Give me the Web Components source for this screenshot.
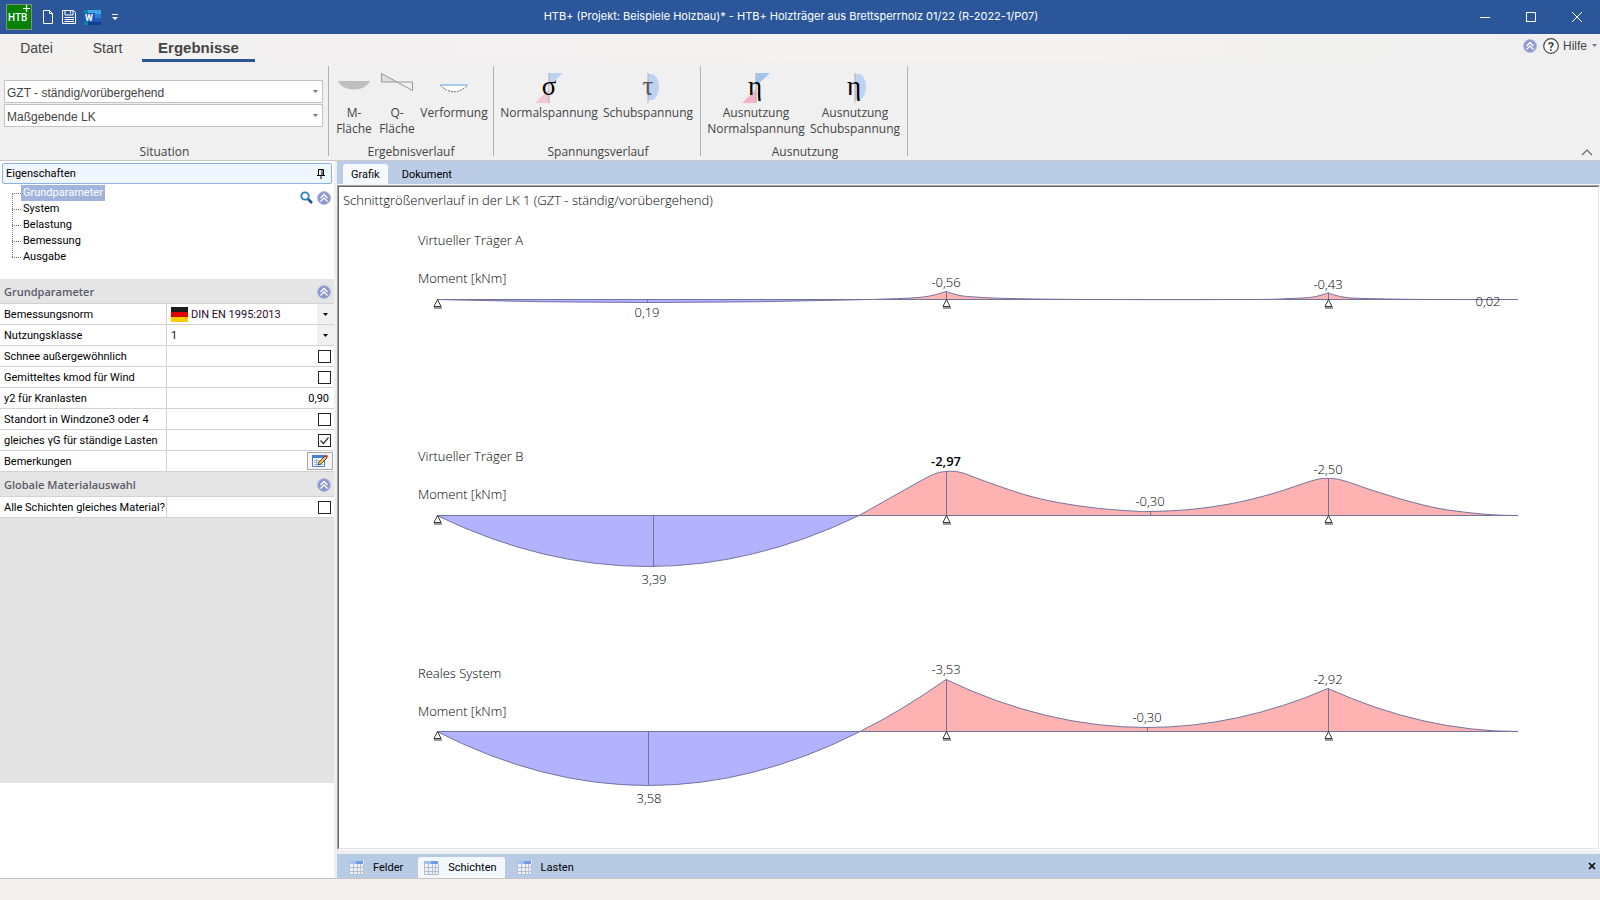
<!DOCTYPE html>
<html lang="de">
<head>
<meta charset="utf-8">
<title>HTB+ Holzträger aus Brettsperrholz</title>
<style>
html, body { margin: 0; height: 100%; }
body { font: 11px/16px Roboto, "Liberation Sans", sans-serif; color: #000; background: #f0f0f0; overflow: hidden; }
</style>
</head>
<body>
<app-window>
  <title-bar slot="title">HTB+ (Projekt: Beispiele Holzbau)* - HTB+ Holzträger aus Brettsperrholz 01/22 (R-2022-1/P07)</title-bar>
  <ribbon-tabs slot="tabs"></ribbon-tabs>
  <ribbon-bar slot="ribbon">
    <ribbon-group caption="Situation" class="selects">
      <ribbon-select label="Situation" value="GZT - ständig/vorübergehend"></ribbon-select>
      <ribbon-select label="Lastkombination" value="Maßgebende LK"></ribbon-select>
    </ribbon-group>
    <ribbon-group caption="Ergebnisverlauf" class="results">
      <ribbon-button icon="moment" style="--w:42px">M-<br>Fläche</ribbon-button>
      <ribbon-button icon="shear" style="--w:44px">Q-<br>Fläche</ribbon-button>
      <ribbon-button icon="deflection" style="--w:70px">Verformung</ribbon-button>
    </ribbon-group>
    <ribbon-group caption="Spannungsverlauf" class="stress">
      <ribbon-button icon="sigma" style="--w:100px">Normalspannung</ribbon-button>
      <ribbon-button icon="tau" style="--w:98px">Schubspannung</ribbon-button>
    </ribbon-group>
    <ribbon-group caption="Ausnutzung" class="usage">
      <ribbon-button icon="etaN" style="--w:100px">Ausnutzung<br>Normalspannung</ribbon-button>
      <ribbon-button icon="etaS" style="--w:98px">Ausnutzung<br>Schubspannung</ribbon-button>
    </ribbon-group>
  </ribbon-bar>
  <side-panel slot="side">
    <nav-tree></nav-tree>
    <prop-section caption="Grundparameter">
      <prop-row label="Bemessungsnorm" type="select" value="DIN EN 1995:2013" flag></prop-row>
      <prop-row label="Nutzungsklasse" type="select" value="1"></prop-row>
      <prop-row label="Schnee außergewöhnlich" type="check"></prop-row>
      <prop-row label="Gemitteltes kmod für Wind" type="check"></prop-row>
      <prop-row label="y2 für Kranlasten" type="text" value="0,90"></prop-row>
      <prop-row label="Standort in Windzone3 oder 4" type="check"></prop-row>
      <prop-row label="gleiches γG für ständige Lasten" type="check" checked></prop-row>
      <prop-row label="Bemerkungen" type="button"></prop-row>
    </prop-section>
    <prop-section caption="Globale Materialauswahl">
      <prop-row label="Alle Schichten gleiches Material?" type="check"></prop-row>
    </prop-section>
  </side-panel>
  <view-tabs slot="main"></view-tabs>
  <moment-diagram slot="main"></moment-diagram>
  <table-tabs slot="main"></table-tabs>
</app-window>

<script>
const define = (name, html, setup) => {
  const template = document.createElement('template');
  template.innerHTML = html;
  customElements.define(name, class extends HTMLElement {
    connectedCallback() {
      if (this.shadowRoot) return;
      this.attachShadow({ mode: 'open' }).append(template.content.cloneNode(true));
      if (setup) setup(this, this.shadowRoot);
    }
  });
};
const RESET = `:host,*{box-sizing:border-box} button{font:inherit;color:inherit;background:none;border:0;padding:0;margin:0} svg{display:block}`;

define('app-window', `<style>${RESET}
:host{display:grid;grid-template:auto auto auto minmax(0,1fr) 22px/334px minmax(0,1fr);column-gap:3px;height:100vh}
.wide{grid-column:1/-1;min-width:0}
.side{background:#fff;min-height:0;overflow:hidden}
main{display:flex;flex-direction:column;min-width:0;min-height:0}
footer{background:#f2f0ef;border-top:1px solid #c6c3c1}
</style>
<div class="wide"><slot name="title"></slot></div>
<div class="wide"><slot name="tabs"></slot></div>
<div class="wide"><slot name="ribbon"></slot></div>
<div class="side"><slot name="side"></slot></div>
<main><slot name="main"></slot></main>
<footer class="wide"></footer>`);

define('title-bar', `<style>${RESET}
:host{display:flex;align-items:center;height:34px;background:#2b579a;color:#fff;font:11px/16px Inter,sans-serif}
.quick{display:flex;align-items:center;width:120px;padding-left:6px}
.new{margin-left:10px}.save{margin-left:7px}.word{margin-left:7px}.more{margin-left:11px}
h1{flex:1;margin:0;font:inherit;text-align:center;white-space:nowrap;padding-bottom:2px}
.win{display:flex}.win button{width:46px;height:34px;display:grid;place-items:center}
</style>
<div class="quick">
<svg width="26" height="26" viewBox="0 0 26 26"><rect x=".5" y=".5" width="25" height="25" fill="#068206" stroke="#84907c"/><text x="2" y="17" font-family="Roboto" font-size="10" font-weight="500" fill="#fff">HTB</text><path d="M17 4.500h7M20.500 1v7" stroke="#fff" stroke-width="1.200"/></svg>
<button class="new" aria-label="Neu"><svg width="12" height="16" viewBox="0 0 12 16" fill="none" stroke="#fff"><path d="M1.500 1.500h6l3 3v10h-9zM7.500 1.500v3h3"/></svg></button>
<button class="save" aria-label="Speichern"><svg width="16" height="16" viewBox="0 0 16 16" fill="none" stroke="#fff"><path d="M1.500 1.500h11l2 2v11h-13zM4 1.500v4.500h8v-4.500M9.500 2v2.500M3.500 8.500h9.500M3.500 10.500h9.500M3.500 12.500h9.500"/></svg></button>
<button class="word" aria-label="Word"><svg width="17" height="17" viewBox="0 0 17 17"><path fill="#41a5ee" d="M4 1h13v4H4z"/><path fill="#2b7cd3" d="M4 5h13v4H4z"/><path fill="#185abd" d="M4 9h13v4H4z"/><path fill="#103f91" d="M4 13h13v3H4z"/><path fill="#0a8c8c" d="M0 1h4v3H0zM0 13h4v3H0z"/><path fill="#185abd" d="M0 4h11v9H0z"/><text x="1" y="12" font-family="Roboto" font-size="9" font-weight="700" fill="#fff">W</text></svg></button>
<button class="more" aria-label="Anpassen"><svg width="6" height="8" viewBox="0 0 6 8"><path fill="#fff" d="M0 1h6v1H0zM0 4h6L3 7z"/></svg></button>
</div>
<h1><slot></slot></h1>
<div class="win">
<button aria-label="Minimieren"><svg width="10" height="10"><path d="M0 5.500h10" stroke="#fff"/></svg></button>
<button aria-label="Maximieren"><svg width="10" height="10"><rect x=".5" y=".5" width="9" height="9" fill="none" stroke="#fff"/></svg></button>
<button aria-label="Schließen"><svg width="10" height="10"><path d="M0 0l10 10M10 0L0 10" stroke="#fff"/></svg></button>
</div>`);

define('fold-icon', `<style>:host{display:block;width:14px;height:14px}svg{display:block}</style>
<svg width="14" height="14" viewBox="0 0 14 14"><circle cx="7" cy="7" r="6.500" fill="#8c97cf" stroke="#b9bce0"/><path d="M3.500 7L7 3.500 10.500 7M3.500 10.500L7 7l3.500 3.500" fill="none" stroke="#fff" stroke-width="1.300"/></svg>`);

define('ribbon-tabs', `<style>${RESET}
:host{display:flex;justify-content:space-between;height:28px;background:linear-gradient(90deg,#f3f1ef 0,#f2f0f1 255px,#f4f3f1 60%,#f0f0f0 95%);color:#444;font:14px/24px "Liberation Sans",sans-serif}
nav{display:flex}nav button{width:71px;height:28px;padding:2px 0 0 2px;border-bottom:3px solid transparent}
nav button.on{width:113px;padding-left:0;font-weight:700;font-size:15px;border-color:#2b579a}
.help{display:flex;align-items:center;gap:6px;padding:0 3px 5px 0;font:12px/16px "Liberation Sans",sans-serif}
.help button{display:flex;align-items:center;gap:4px}
.help .arrow{margin-left:1px}
</style>
<nav><button>Datei</button><button>Start</button><button class="on">Ergebnisse</button></nav>
<div class="help"><button aria-label="Einklappen"><fold-icon></fold-icon></button>
<button><svg width="16" height="16" viewBox="0 0 16 16"><circle cx="8" cy="8" r="7.300" fill="#fff" stroke="#444" stroke-width="1.200"/><text x="8" y="12.500" text-anchor="middle" font-family="Roboto" font-weight="700" font-size="12" fill="#444">?</text></svg>Hilfe<svg class="arrow" width="5" height="3"><path d="M0 0h5L2.500 3z" fill="#777"/></svg></button></div>`);

define('ribbon-bar', `<style>${RESET}
:host{display:flex;height:99px;background:#f0f0f0;border-bottom:1px solid #c9c9c9;color:#444;font:12px/16px "Open Sans",sans-serif}
.up{margin:auto 7px 4px auto}
</style><slot></slot><button class="up" aria-label="Menüband reduzieren"><svg width="12" height="7"><path d="M1 6l5-5 5 5" fill="none" stroke="#666" stroke-width="1.200"/></svg></button>`);

define('ribbon-group', `<style>${RESET}
:host{display:flex;flex-direction:column;position:relative;padding-top:10px}
:host::after{content:"";position:absolute;right:0;top:4px;bottom:4px;width:1px;background:#b3b0ae}
.items{flex:1;display:flex}
:host(.selects){width:329px}
:host(.selects) .items{flex-direction:column;gap:1px;padding:8px 6px 0 4px}
:host(.results){padding-left:4px;padding-right:5px}
:host(.stress){padding-left:5px;padding-right:4px}
:host(.usage){padding-left:5px;padding-right:4px}
.cap{text-align:center}
</style><div class="items"><slot></slot></div><div class="cap"></div>`,
(h, r) => r.querySelector('.cap').textContent = h.getAttribute('caption'));

define('ribbon-select', `<style>${RESET}
:host{display:block;position:relative}
select{appearance:none;display:block;width:100%;height:23px;border:1px solid #c3c3c3;border-radius:0;background:#fff;color:#444;font:12px/16px "Liberation Sans",sans-serif;padding:2px 2px 0}
svg{position:absolute;right:5px;top:10px;pointer-events:none}
</style><select><option></option></select><svg width="5" height="3"><path d="M0 0h5L2.500 3z" fill="#777"/></svg>`,
(h, r) => { r.querySelector('option').textContent = h.getAttribute('value'); r.querySelector('select').setAttribute('aria-label', h.getAttribute('label')); });

const wedge = (blue, pink) => `<path d="M16 1h14L16 14z" fill="${blue}"/><path d="M2 31h14V17z" fill="${pink}"/><path d="M16 1v30" stroke="#b0b0b8"/>`;
const lens = `<path d="M16 2h5c8 5 8 21 0 26h-5z" fill="#bdd3f3"/><path d="M16 1v30" stroke="#b0b0b8"/>`;
const greek = (c, x, fill = '#000') => `<text x="${x}" y="23" text-anchor="middle" font-family="Liberation Serif" font-size="27" fill="${fill}">${c}</text>`;
const ICONS = {
  moment: '<path d="M0 9h32c-2 5-9 8.500-16 8.500S2 14 0 9z" fill="#bfbfbf"/>',
  shear: '<path d="M.5 1.500v8.500h16z" fill="#ddd"/><path d="M.5 1.500v8.500h31v8.500z" fill="none" stroke="#999"/>',
  deflection: '<path d="M2.500 13.500Q16 26 29.500 13.500" fill="#fff" stroke="#666" stroke-dasharray="2 1"/><path d="M2 13h28" stroke="#8fbfee" stroke-width="1.500"/>',
  sigma: wedge('#bcd3f2', '#f2c6d6') + greek('σ', 16),
  tau: lens + greek('τ', 16, '#555'),
  etaN: wedge('#a3c4f0', '#f5b0cb') + greek('η', 15),
  etaS: lens + greek('η', 15)
};
define('ribbon-button', `<style>${RESET}
:host{display:block;width:var(--w)}
button{width:100%;display:flex;flex-direction:column;align-items:center;white-space:nowrap}
svg{margin-bottom:1px;overflow:visible}
</style><button><svg width="32" height="32" viewBox="0 0 32 32"></svg><span><slot></slot></span></button>`,
(h, r) => r.querySelector('svg').innerHTML = ICONS[h.getAttribute('icon')]);

define('side-panel', `<style>${RESET}
:host{display:flex;flex-direction:column;height:100%}
.head{display:flex;justify-content:space-between;align-items:center;height:21px;margin:2px 2px 1px;padding:0 6px 0 3px;background:#f0f6fe;border:1px solid #8cb1e6;border-radius:2px}
h2{margin:0;font:inherit}
.rest{flex:1;background:#e3e3e3;margin-bottom:95px}
</style><div class="head"><h2>Eigenschaften</h2><button aria-label="Anheften"><svg width="8" height="10" viewBox="0 0 8 10"><path d="M1.500 6V.5h5V6M0 6.500h8M4 7v3M5 1v5" fill="none" stroke="#000"/></svg></button></div>
<slot></slot><div class="rest"></div>`);

define('nav-tree', `<style>${RESET}
:host{display:flex;justify-content:space-between;height:94px;background:#fff}
ul{list-style:none;margin:0 0 0 12px;padding:0;position:relative}
ul::before{content:"";position:absolute;left:0;top:8px;height:64px;border-left:1px dotted #777}
li{display:flex;align-items:center;height:16px}
li::before{content:"";width:9px;border-top:1px dotted #777}
a{color:#000;text-decoration:none;padding:0 2px;line-height:16px}
a.on{background:#a0b4de;color:#fff}
.tools{display:flex;gap:4px;padding:6px 3px 0 0;align-items:flex-start}
</style><ul><li><a href="#g" class="on">Grundparameter</a></li><li><a href="#s">System</a></li><li><a href="#b">Belastung</a></li><li><a href="#m">Bemessung</a></li><li><a href="#a">Ausgabe</a></li></ul>
<div class="tools"><button aria-label="Suchen"><svg width="13" height="13" viewBox="0 0 13 13"><path d="M8 8l4 4" stroke="#1d4f86" stroke-width="2.500"/><circle cx="5" cy="5" r="3.700" fill="#fff" stroke="#2f7fc4" stroke-width="1.800"/></svg></button><button aria-label="Einklappen"><fold-icon></fold-icon></button></div>`);

define('prop-section', `<style>${RESET}
:host{display:block}
.head{display:flex;justify-content:space-between;align-items:center;height:25px;padding:1px 3px 0 4px;background:#e5e5e5;border-bottom:1px solid #d2d2d2}
h3{margin:0;font:600 11px/16px "Open Sans",sans-serif;color:#5c5c6c}
</style><div class="head"><h3></h3><button aria-label="Einklappen"><fold-icon></fold-icon></button></div><slot></slot>`,
(h, r) => r.querySelector('h3').textContent = h.getAttribute('caption'));

define('prop-row', `<style>${RESET}
:host{display:grid;grid-template-columns:166px 1fr;height:21px;background:#fff;border-bottom:1px solid #d2d2d2}
label{padding:3px 0 0 4px;white-space:nowrap}
.cell{display:flex;align-items:center;justify-content:flex-end;border-left:1px solid #d2d2d2}
.pick{flex:1;display:flex;align-items:center;height:100%;padding-left:4px}
.pick .flag{margin-right:2px}
select{appearance:none;flex:1;height:20px;border:0;background:none;font:inherit;color:#2a0a2a;padding:2px 0 0}
.arr{width:17px;height:20px;background:#f0f0f0;display:grid;place-items:center}
input[type=text]{width:100%;height:20px;border:0;background:none;font:inherit;text-align:right;padding:0 5px}
input[type=checkbox]{appearance:none;width:13px;height:13px;margin:0 3px 0 0;border:1px solid #222;background:#fff}
input:checked{background:url("data:image/svg+xml,%3Csvg xmlns='http://www.w3.org/2000/svg' viewBox='0 0 11 11'%3E%3Cpath d='M1.500 5.500l3 3 5-6' fill='none' stroke='%23333' stroke-width='1.200'/%3E%3C/svg%3E")}
button{width:26px;height:18px;margin-right:1px;background:#f4f4f4;border:1px solid #a8a8a8;display:grid;place-items:center}
</style><label for="c"></label><div class="cell"></div>`,
(h, r) => {
  r.querySelector('label').textContent = h.getAttribute('label');
  const v = h.getAttribute('value') || '';
  const flag = h.hasAttribute('flag') ? '<svg class="flag" width="18" height="15"><path d="M0 0h17v5H0z" fill="#1c1c1c"/><path d="M0 5h17v5H0z" fill="#e00000"/><path d="M0 10h17v5H0z" fill="#fc0"/></svg>' : '';
  r.querySelector('.cell').innerHTML = {
    select: `<div class="pick">${flag}<select id="c"><option>${v}</option></select><span class="arr"><svg width="5" height="3"><path d="M0 0h5L2.500 3z"/></svg></span></div>`,
    check: `<input id="c" type="checkbox"${h.hasAttribute('checked') ? ' checked' : ''}>`,
    text: `<input id="c" type="text" value="${v}">`,
    button: '<button id="c"><svg width="16" height="14" viewBox="0 0 16 14"><path d="M.5 1.500h12v11H.5z" fill="#fff" stroke="#4f7cc0"/><path d="M0 1h13v3H0z" fill="#4a80d4"/><path d="M2 6.500h9M2 8.500h9M2 10.500h9M4.500 5v7" stroke="#9db9e2"/><path d="M6 11l1-3 6-6 2 2-6 6z" fill="#eebd4e" stroke="#333" stroke-width=".8"/><path d="M13 2l1-1.500 2 1.500-1 2z" fill="#c0392b"/></svg></button>'
  }[h.getAttribute('type')];
});

define('view-tabs', `<style>${RESET}
:host{display:flex;align-items:flex-end;height:24px;padding-left:6px;background:#bbcde6;border-bottom:1px solid #f4f8fd}
button{height:20px;padding:1px 14px 0}
.on{background:#f6faff;border-radius:3px 3px 0 0;padding:1px 8px 0}
</style><button class="on">Grafik</button><button>Dokument</button>`);

const ticks = '<svg width="15" height="14" viewBox="0 0 15 14"><path d="M0 0h15v14H0z" fill="#eef2f8"/><path d="M0 0h14v3H0z" fill="#6f9be6"/><path d="M0 0h7v3H0z" fill="#a4c0ee"/><path d="M.5 3v10.500h14V3M0 6.500h15M0 10.500h15M4.500 3v10M8.500 3v10M11.500 3v10" fill="none" stroke="#b4bfd2"/></svg>';
define('table-tabs', `<style>${RESET}
:host{display:flex;align-items:flex-end;height:24px;margin-top:4px;background:#b8cbe4}
.tab{display:flex;align-items:center;gap:9px;height:21px;padding:0 9px 0 6px}
.tab:first-of-type{margin-left:6px}.on{background:#f3f8ff;border-radius:3px 3px 0 0;margin:0 6px;padding:0 8px 0 6px}
.close{margin:auto 4px auto auto}
</style><button class="tab">${ticks}Felder</button><button class="tab on">${ticks}Schichten</button><button class="tab">${ticks}Lasten</button>
<button class="close" aria-label="Schließen"><svg width="8" height="8"><path d="M1 1l6 6M7 1L1 7" stroke="#000" stroke-width="1.500"/></svg></button>`);

/* Smooth curve through measured points. */
const curve = p => p.slice(1).map((b, i) => {
  const a = p[i], z = p[i - 1] || a, c = p[i + 2] || b;
  return `C${a[0] + (b[0] - z[0]) / 6} ${a[1] + (b[1] - z[1]) / 6} ${b[0] - (c[0] - a[0]) / 6} ${b[1] - (c[1] - a[1]) / 6} ${b[0]} ${b[1]}`;
}).join('');
/* Exact parabola piece with vertex (xv, yv), ending in (x1, y1), started at x0. */
const para = (x0, x1, xv, yv, y1) => {
  const k = (y1 - yv) / (x1 - xv) ** 2;
  const y0 = yv + k * (x0 - xv) ** 2;
  return `Q${(x0 + x1) / 2} ${y0 + k * (x0 - xv) * (x1 - x0)} ${x1} ${y1}`;
};
const fall = (x0, y0, xv, yv) => `Q${(x0 + xv) / 2} ${yv} ${xv} ${yv}`;

const BEAMS = [
  { name: 'Virtueller Träger A', y: 299, top: 241, x0: 870,
    sag: 'Q647 305 870 299',
    hog: curve([[870,299],[900,298],[918,297],[932,295],[946,291]]) + curve([[946,291],[960,295],[975,296.5],[1010,298],[1090,299],[1250,299],[1290,298],[1313,296.5],[1328,292.5]]) + curve([[1328,292.5],[1343,296.5],[1365,298],[1430,299],[1518,299]]),
    marks: [[647,302],[946,291],[1328,292]],
    labels: [['0,19',647,312],['-0,56',946,282],['-0,43',1328,284],['0,02',1488,301]] },
  { name: 'Virtueller Träger B', y: 515, top: 457, x0: 859,
    sag: 'Q648 617 859 515',
    hog: curve([[859,515],[900,492],[931,475],[946,471],[961,472],[983,480],[1024,494],[1058,502],[1095,507.500],[1132,510.500],[1150,511],[1190,509],[1232,503],[1273,493],[1313,480],[1328,478],[1343,480],[1373,490],[1406,500],[1439,508],[1472,512.500],[1497,514.500],[1518,515]]),
    marks: [[653,566],[946,471],[1150,511],[1328,478]],
    labels: [['3,39',654,579],['-2,97',946,461,600],['-0,30',1150,501],['-2,50',1328,469]] },
  { name: 'Reales System', y: 731, top: 674, x0: 860,
    sag: 'Q648 839 860 731',
    hog: para(860, 946, 648, 785, 679) + fall(946, 679, 1147, 727) + para(1147, 1328, 1147, 727, 688) + fall(1328, 688, 1518, 731),
    marks: [[648,785],[946,679],[1147,727],[1328,688]],
    labels: [['3,58',649,798],['-3,53',946,669],['-0,30',1147,717],['-2,92',1328,679]] }
];
const drawBeam = b => {
  const sag = `M437 ${b.y}${b.sag}`, hog = `M${b.x0} ${b.y}${b.hog}`;
  const support = x => `<path class="sup" d="M${x + .5} ${b.y}l-3.500 7h7zM${x - 3} ${b.y + 8.500}h8"/>`;
  const label = ([t, x, m, w]) => `<text x="${x}" y="${m + 5}" text-anchor="middle"${w ? ` class="max"` : ''}>${t}</text>`;
  return `<g transform="translate(0 .5)"><path d="${sag}z" fill="#b2b2ff"/><path d="${hog}z" fill="#ffb2b2"/>
    <path class="ln" d="${sag}${hog}M437 ${b.y}H1518${b.marks.map(([x, y]) => `M${x + .5} ${b.y}V${y}`).join('')}"/>${[437, 946, 1328].map(support).join('')}</g>
    ${b.labels.map(label).join('')}<text x="418" y="${b.top + 4}">${b.name}</text><text x="418" y="${b.top + 42}">Moment [kNm]</text>`;
};
define('moment-diagram', `<style>
:host{display:block;flex:1;min-height:0;box-sizing:border-box;background:#fff;border:1px solid;border-color:#a0a0a0 #fff #fff #a0a0a0}
svg{display:block;box-sizing:border-box;width:100%;height:100%;border:1px solid;border-color:#696969 #e3e3e3 #e3e3e3 #696969}
text{font:300 13px "Open Sans",sans-serif;fill:#000}
.max{font-weight:600}
.ln{fill:none;stroke:#73739f}
.sup{fill:#fff;stroke:#222;stroke-width:.9}
</style><svg viewBox="339 187 1259 661" preserveAspectRatio="xMinYMin meet" role="img" aria-label="Schnittgrößenverlauf">
<text x="343" y="205">Schnittgrößenverlauf in der LK 1 (GZT - ständig/vorübergehend)</text>${BEAMS.map(drawBeam).join('')}</svg>`);
</script>
</body>
</html>
